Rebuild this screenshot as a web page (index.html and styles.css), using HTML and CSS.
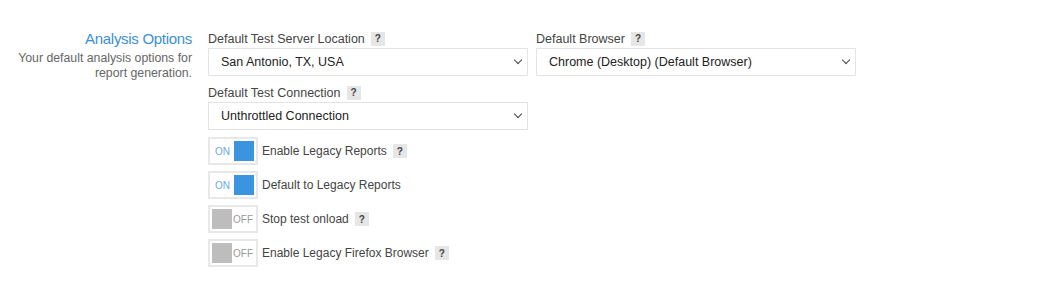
FILE: index.html
```html
<!DOCTYPE html>
<html lang="en">
  <head>
    <meta charset="utf-8">
    <title>Settings</title>
    <link rel="stylesheet" href="styles.css">
  </head>
  <body>
    <div class="section">
      <div class="section-info">
        <h2>Analysis Options</h2>
        <p>Your default analysis options for report generation.</p>
      </div>

      <div class="section-fields">
        <div class="field-row">
          <div class="field">
            <label>Default Test Server Location <span class="help">?</span></label>
            <div class="select">San Antonio, TX, USA</div>
          </div>
          <div class="field">
            <label>Default Browser <span class="help">?</span></label>
            <div class="select">Chrome (Desktop) (Default Browser)</div>
          </div>
        </div>

        <div class="field-row">
          <div class="field">
            <label>Default Test Connection <span class="help">?</span></label>
            <div class="select">Unthrottled Connection</div>
          </div>
        </div>

        <div class="toggles">
          <div class="toggle-row">
            <span class="switch on"><span class="txt">ON</span><span class="knob"></span></span>
            <span class="toggle-label">Enable Legacy Reports</span>
            <span class="help">?</span>
          </div>
          <div class="toggle-row">
            <span class="switch on"><span class="txt">ON</span><span class="knob"></span></span>
            <span class="toggle-label">Default to Legacy Reports</span>
          </div>
          <div class="toggle-row">
            <span class="switch off"><span class="knob"></span><span class="txt">OFF</span></span>
            <span class="toggle-label">Stop test onload</span>
            <span class="help">?</span>
          </div>
          <div class="toggle-row">
            <span class="switch off"><span class="knob"></span><span class="txt">OFF</span></span>
            <span class="toggle-label">Enable Legacy Firefox Browser</span>
            <span class="help">?</span>
          </div>
        </div>
      </div>
    </div>
  </body>
</html>
```

FILE: styles.css
```css
body {
  margin: 0;
  background: #fff;
  font-family: "Liberation Sans", Arial, sans-serif;
  color: #333;
}

.section {
  display: flex;
  padding-top: 29px;
}

.section-info {
  width: 192px;
  text-align: right;
  margin-right: 16px;
}

.section-info h2 {
  margin: 0;
  font-size: 15px;
  letter-spacing: -0.3px;
  font-weight: normal;
  color: #3b8fd6;
  line-height: 20px;
}

.section-info p {
  margin: 2px 0 0 auto;
  width: 190px;
  font-size: 12.3px;
  line-height: 15px;
  color: #666;
}

.field-row {
  display: flex;
  gap: 8px;
}

.field {
  width: 320px;
  margin-bottom: 7px;
}

.field label {
  display: flex;
  align-items: center;
  gap: 6px;
  height: 19px;
  font-size: 12.5px;
  color: #444;
}

.help {
  display: inline-flex;
  align-items: center;
  justify-content: center;
  width: 14px;
  height: 14px;
  background: #e6e6e6;
  color: #444;
  font-size: 10px;
  font-weight: bold;
}

.select {
  position: relative;
  border: 1px solid #e3e3e3;
  box-sizing: border-box;
  height: 28px;
  padding: 0 12px;
  font-size: 12.5px;
  line-height: 26px;
  color: #222;
}

.select::after {
  content: "";
  position: absolute;
  right: 6px;
  top: 8px;
  width: 5px;
  height: 5px;
  border-right: 1.3px solid #444;
  border-bottom: 1.3px solid #444;
  transform: rotate(45deg);
}

.toggles {
  margin-top: -3px;
}

.toggle-row {
  display: flex;
  align-items: center;
  height: 34px;
}

.switch {
  display: flex;
  align-items: center;
  justify-content: space-between;
  box-sizing: border-box;
  width: 50px;
  height: 28px;
  border: 2px solid #e8e8e8;
  padding: 0 2px 0 5px;
  margin-right: 4px;
}

.switch.off {
  padding: 0 3px 0 2px;
}

.switch .txt {
  font-size: 10px;
  color: #999;
}

.switch.on .txt {
  color: #6aaae0;
}

.knob {
  width: 20px;
  height: 20px;
}

.switch.on .knob {
  background: #3a94e0;
}

.switch.off .knob {
  background: #bdbdbd;
}

.toggle-label {
  font-size: 12px;
  color: #444;
  margin-right: 6px;
}
```
